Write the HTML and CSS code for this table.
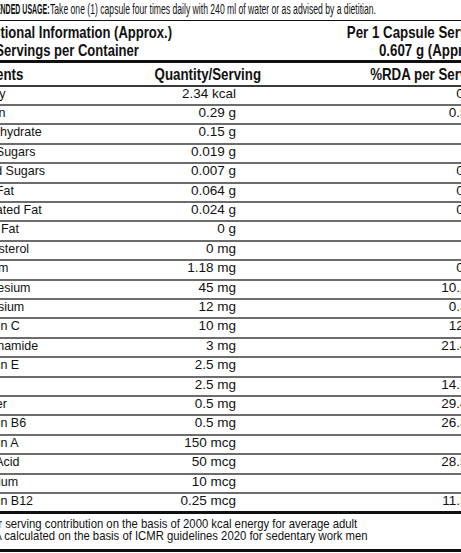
FILE: index.html
```html
<!DOCTYPE html>
<html lang="en">
<head>
<meta charset="utf-8">
<title>Nutritional Information</title>
<link rel="stylesheet" href="styles.css">
</head>
<body>
<div class="label">
  <div class="usage">
    <span class="usage-key">RECOMMENDED USAGE:</span>
    <span class="usage-text">Take one (1) capsule four times daily with 240 ml of water or as advised by a dietitian.</span>
  </div>
  <div class="title">
    <div class="title-left">
      <div class="tline"><span class="cond-t">Nutritional Information (Approx.)</span></div>
      <div class="tline"><span class="cond-t">120 Servings per Container</span></div>
    </div>
    <div class="title-right">
      <div class="tline"><span class="cond-r">Per 1 Capsule Serving</span></div>
      <div class="tline"><span class="cond-r">0.607 g (Approx.)</span></div>
    </div>
  </div>
  <div class="head">
    <span class="cond-l">Nutrients</span>
    <span class="cond-r hq">Quantity/Serving</span>
    <span class="cond-r hr">%RDA per Serving</span>
  </div>
  <div class="rows">
    <div class="row"><span class="name"><span>Energy</span></span><span class="qty">2.34 kcal</span><span class="rda">0.1%</span></div>
    <div class="row"><span class="name"><span>Protein</span></span><span class="qty">0.29 g</span><span class="rda">0.54%</span></div>
    <div class="row"><span class="name"><span>Carbohydrate</span></span><span class="qty">0.15 g</span><span class="rda">-</span></div>
    <div class="row"><span class="name"><span>Total Sugars</span></span><span class="qty">0.019 g</span><span class="rda">-</span></div>
    <div class="row"><span class="name"><span>Added Sugars</span></span><span class="qty">0.007 g</span><span class="rda">0.1%</span></div>
    <div class="row"><span class="name"><span>Total Fat</span></span><span class="qty">0.064 g</span><span class="rda">0.1%</span></div>
    <div class="row"><span class="name"><span>Saturated Fat</span></span><span class="qty">0.024 g</span><span class="rda">0.1%</span></div>
    <div class="row"><span class="name"><span>Trans Fat</span></span><span class="qty">0 g</span><span class="rda">-</span></div>
    <div class="row"><span class="name"><span>Cholesterol</span></span><span class="qty">0 mg</span><span class="rda">-</span></div>
    <div class="row"><span class="name"><span>Sodium</span></span><span class="qty">1.18 mg</span><span class="rda">0.1%</span></div>
    <div class="row"><span class="name"><span>Magnesium</span></span><span class="qty">45 mg</span><span class="rda">10.23%</span></div>
    <div class="row"><span class="name"><span>Potassium</span></span><span class="qty">12 mg</span><span class="rda">0.34%</span></div>
    <div class="row"><span class="name"><span>Vitamin C</span></span><span class="qty">10 mg</span><span class="rda">12.5%</span></div>
    <div class="row"><span class="name"><span>Nicotinamide</span></span><span class="qty">3 mg</span><span class="rda">21.43%</span></div>
    <div class="row"><span class="name"><span>Vitamin E</span></span><span class="qty">2.5 mg</span><span class="rda">-</span></div>
    <div class="row"><span class="name"><span>Zinc</span></span><span class="qty">2.5 mg</span><span class="rda">14.71%</span></div>
    <div class="row"><span class="name"><span>Copper</span></span><span class="qty">0.5 mg</span><span class="rda">29.41%</span></div>
    <div class="row"><span class="name"><span>Vitamin B6</span></span><span class="qty">0.5 mg</span><span class="rda">26.32%</span></div>
    <div class="row"><span class="name"><span>Vitamin A</span></span><span class="qty">150 mcg</span><span class="rda">-</span></div>
    <div class="row"><span class="name"><span>Folic Acid</span></span><span class="qty">50 mcg</span><span class="rda">28.57%</span></div>
    <div class="row"><span class="name"><span>Selenium</span></span><span class="qty">10 mcg</span><span class="rda">-</span></div>
    <div class="row"><span class="name"><span>Vitamin B12</span></span><span class="qty">0.25 mcg</span><span class="rda">11.36%</span></div>
  </div>
  <div class="notes">
    <div class="nline n1"><span>*Per serving contribution on the basis of 2000 kcal energy for average adult</span></div>
    <div class="nline n2"><span>**RDA calculated on the basis of ICMR guidelines 2020 for sedentary work men</span></div>
  </div>
</div>
</body>
</html>
```
FILE: styles.css
```css
html, body {
  margin: 0;
  padding: 0;
}

body {
  width: 461px;
  height: 553px;
  overflow: hidden;
  background: #ffffff;
  color: #111111;
  font-family: "Liberation Sans", Arial, sans-serif;
}

.label {
  width: 540px;
  margin-left: -40px;
  box-sizing: border-box;
  padding: 0 13px 0 6px;
}

/* usage line */
.usage {
  display: flex;
  align-items: flex-start;
  height: 20px;
  margin-left: -2.5px;
  border-bottom: 1px solid #111;
  font-size: 14px;
  line-height: 18px;
  white-space: nowrap;
}

.usage-key {
  flex: none;
  width: 85.5px;
  font-weight: bold;
  transform: scaleX(0.5);
  transform-origin: 0 0;
}

.usage-text {
  flex: none;
  margin-left: 1px;
  transform: scaleX(0.615);
  transform-origin: 0 0;
}

/* title */
.title {
  display: flex;
  justify-content: space-between;
  padding: 2px 0 0 3.6px;
  border-bottom: 3px solid #111;
  font-size: 16.5px;
  font-weight: bold;
  line-height: 18.3px;
}

.title-right {
  text-align: right;
}

.tline {
  white-space: nowrap;
}

.cond-t {
  display: inline-block;
  white-space: nowrap;
  transform: scaleX(0.79);
  transform-origin: 0 50%;
}

.cond-l {
  display: inline-block;
  white-space: nowrap;
  transform: scaleX(0.806);
  transform-origin: 0 50%;
}

.cond-r {
  display: inline-block;
  white-space: nowrap;
  transform: scaleX(0.806);
  transform-origin: 100% 50%;
}

/* header */
.head {
  display: grid;
  grid-template-columns: 136px 160px 1fr;
  height: 21.6px;
  padding-top: 0.5px;
  margin-left: -1px;
  border-bottom: 2px solid #3a3a3a;
  font-size: 16.5px;
  font-weight: bold;
  line-height: 22px;
}

.hq,
.hr {
  justify-self: end;
}

/* rows */
.row {
  display: grid;
  grid-template-columns: 184px 86px 1fr;
  align-items: start;
  height: 19.4px;
  box-sizing: border-box;
  border-bottom: 2px solid #6c6c6c;
  line-height: 14px;
  white-space: nowrap;
}

.row:last-child {
  height: 17.4px;
  border-bottom: none;
}

.name {
  font-size: 13px;
}

.name span {
  display: inline-block;
  transform: scaleX(0.96);
  transform-origin: 0 50%;
}

.qty,
.rda {
  font-size: 13.5px;
  text-align: right;
}

/* notes */
.notes {
  padding: 4.2px 0 7.1px 0;
  border-top: 3px solid #111;
  border-bottom: 3px solid #111;
  font-size: 13px;
  line-height: 11.8px;
}

.nline {
  white-space: nowrap;
}

.n1 {
  padding-left: 13.5px;
}

.n2 {
  padding-left: 3px;
}

.nline span {
  display: inline-block;
  transform: scaleX(0.87);
  transform-origin: 0 50%;
}
```
